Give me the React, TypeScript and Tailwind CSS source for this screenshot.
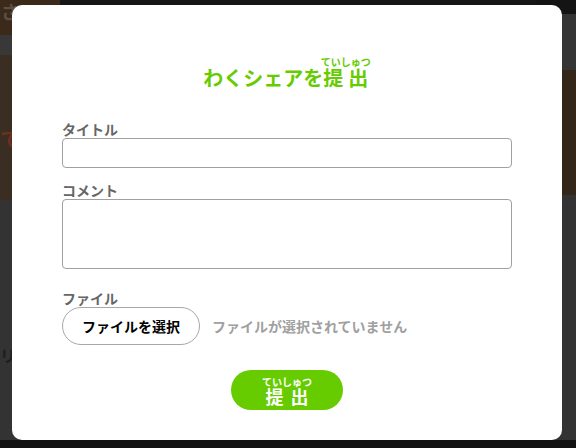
import React from 'react';

const jp = "font-['Noto_Sans_CJK_JP','Noto_Sans',sans-serif]";

function Background() {
  return (
    <div className="flex h-[448px] w-[576px] bg-[#333333]">
      <div className="flex w-[60px] flex-col">
        <div className="flex h-[35px] items-start bg-[#3b2a19] pl-[1px] text-[18px] font-bold leading-[22px] text-[#5a5048]">さ</div>
        <div className="h-[20px] bg-[#383838]" />
        <div className="flex h-[145px] flex-col bg-[#3a2e22] pt-[70px] text-[22px] font-bold leading-[24px] text-[#6b3020]">
          <span>て</span>
        </div>
        <div className="flex h-[240px] items-center bg-[#333333] pt-[70px] text-[16px] font-bold text-[#1e1e1e]">リ</div>
        <div className="h-[8px] bg-[#121212]" />
      </div>
      <div className="flex flex-1 flex-col">
        <div className="h-[14px] bg-[#161616]" />
        <div className="flex-1 bg-[#333333]" />
        <div className="h-[8px] bg-[#121212]" />
      </div>
      <div className="flex w-[40px] flex-col">
        <div className="h-[14px] bg-[#141414]" />
        <div className="h-[56px] bg-[#353535]" />
        <div className="h-[125px] bg-[#35261a]" />
        <div className="flex-1 bg-[#333333]" />
        <div className="h-[8px] bg-[#121212]" />
      </div>
    </div>
  );
}

function Field({ label, children }: { label: string; children: React.ReactNode }) {
  return (
    <div className="flex flex-col">
      <label className="text-[14px] font-bold leading-[18px] text-[#666666]">{label}</label>
      {children}
    </div>
  );
}

export default function App() {
  return (
    <div className={`relative h-[448px] w-[576px] overflow-hidden ${jp}`}>
      <Background />
      <div className="absolute inset-0 flex items-start pl-[12px] pt-[5px]">
        <div className="flex h-[435px] w-[550px] flex-col rounded-[10px] bg-white px-[50px] pt-[52px]">
          <h2 className="text-center text-[20px] font-bold leading-[26px] text-[#66cc00]">
            わくシェアを<ruby>提出<rt className="text-[10px] leading-[12px]">ていしゅつ</rt></ruby>
          </h2>
          <div className="mt-[29px] flex flex-col">
            <Field label="タイトル">
              <input className="block h-[30px] w-full rounded-[4px] border border-[#a0a0a0] px-2 outline-none" />
            </Field>
            <div className="mt-[13px]">
              <Field label="コメント">
                <textarea className="block h-[70px] w-full resize-none rounded-[4px] border border-[#a0a0a0] px-2 outline-none" />
              </Field>
            </div>
            <div className="mt-[20px]">
              <Field label="ファイル">
                <div className="flex items-center gap-[12px]">
                  <button className="h-[38px] w-[138px] rounded-full border border-[#a8a8a8] bg-white text-[14px] font-bold text-black">
                    ファイルを選択
                  </button>
                  <span className="text-[14px] font-bold text-[#a0a0a0]">ファイルが選択されていません</span>
                </div>
              </Field>
            </div>
          </div>
          <div className="mt-[25px] flex justify-center">
            <button className="flex h-[40px] w-[112px] items-center justify-center rounded-full bg-[#66cc00] pt-[2px] text-[18px] font-bold leading-[20px] text-white">
              <ruby>提出<rt className="text-[10px] leading-[11px]">ていしゅつ</rt></ruby>
            </button>
          </div>
        </div>
      </div>
    </div>
  );
}
